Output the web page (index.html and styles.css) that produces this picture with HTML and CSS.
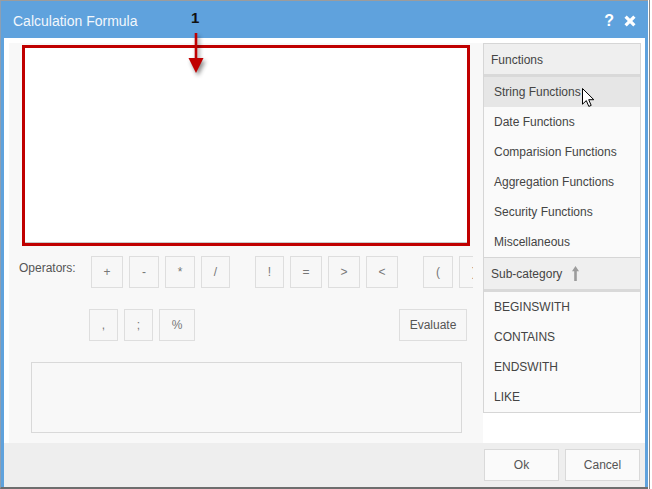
FILE: index.html
```html
<!DOCTYPE html>
<html>
<head>
<meta charset="utf-8">
<title>Calculation Formula</title>
<link rel="stylesheet" href="styles.css">
</head>
<body>
<div class="window">
  <div class="titlebar">
    <span class="title">Calculation Formula</span>
    <div class="tools">
      <span class="help">?</span>
      <svg class="close" width="12" height="12" viewBox="0 0 12 12"><path d="M1.6 1.6L10.4 10.4M10.4 1.6L1.6 10.4" stroke="#fff" stroke-width="3.2"/></svg>
    </div>
  </div>
  <div class="content">
    <div class="editor">
      <div class="formula-box"><div class="formula-input"></div></div>
      <div class="ops">
        <div class="ops-label">Operators:</div>
        <div class="ops-rows">
          <div class="ops-row row1">
            <div class="op w32">+</div>
            <div class="op w30">-</div>
            <div class="op w30">*</div>
            <div class="op w29">/</div>
            <div class="op w29 group">!</div>
            <div class="op w32">=</div>
            <div class="op w32">&gt;</div>
            <div class="op w32">&lt;</div>
            <div class="op w30 group">(</div>
            <div class="op w30">)</div>
          </div>
          <div class="ops-row row2">
            <div class="op w29">,</div>
            <div class="op w29">;</div>
            <div class="op w36">%</div>
            <div class="op evaluate">Evaluate</div>
          </div>
        </div>
      </div>
      <div class="result"></div>
    </div>
    <div class="side">
      <div class="list">
        <div class="list-head top">Functions</div>
        <div class="item hover">String Functions</div>
        <div class="item">Date Functions</div>
        <div class="item">Comparision Functions</div>
        <div class="item">Aggregation Functions</div>
        <div class="item">Security Functions</div>
        <div class="item">Miscellaneous</div>
        <div class="list-head sub">Sub-category
          <svg class="sort-icon" width="7" height="15" viewBox="0 0 7 15"><path d="M3.5 0L7 5.2H4.8V15H2.2V5.2H0Z" fill="#9c9c9c"/></svg>
        </div>
        <div class="item">BEGINSWITH</div>
        <div class="item">CONTAINS</div>
        <div class="item">ENDSWITH</div>
        <div class="item">LIKE</div>
      </div>
    </div>
  </div>
  <div class="footer">
    <button class="btn">Ok</button>
    <button class="btn">Cancel</button>
  </div>

  <span class="anno-num">1</span>
  <svg class="anno-arrow" width="24" height="48" viewBox="0 0 24 48"><rect x="8.7" y="2" width="2.6" height="27" fill="#c00000"/><path d="M2.5 27H17.5L10 42Z" fill="#c00000"/></svg>
  <svg class="cursor" width="13" height="20" viewBox="0 0 13 20"><path d="M0.5 0.5V16.2L4.3 12.6L6.8 18.4L9.2 17.4L6.7 11.7H11.8Z" fill="#fff" stroke="#000" stroke-width="1" stroke-linejoin="miter"/></svg>
</div>
</body>
</html>
```
FILE: styles.css
```css
body {
  margin: 0;
  background: #fff;
  font-family: "Liberation Sans", Arial, sans-serif;
}

.window {
  position: relative;
  width: 648px;
  height: 489px;
  box-sizing: border-box;
  border-top: 1px solid #9c9c9c;
  border-left: 1px solid #8d9fb3;
  border-bottom: 2px solid #6e6e6e;
  background: #5fa2dd;
  padding: 0 3px;
  display: flex;
  flex-direction: column;
  box-shadow: 1px 0 0 #fff, 2px 0 0 #8a8a8a;
}

.titlebar {
  flex: none;
  height: 37px;
  box-sizing: border-box;
  padding: 2px 9px 0 9px;
  display: flex;
  align-items: center;
  justify-content: space-between;
  color: #f2f7fc;
}

.title {
  font-size: 14px;
  line-height: 16px;
}

.tools {
  display: flex;
  align-items: center;
  gap: 10px;
}

.help {
  font-weight: bold;
  font-size: 16px;
  line-height: 16px;
  color: #fff;
}

.close {
  display: block;
}

.content {
  flex: 1;
  min-height: 0;
  display: flex;
  background: #fff;
  padding: 5px 4px 0 5px;
}

.editor {
  width: 474px;
  flex: none;
  background: #f8f8f8;
  display: flex;
  flex-direction: column;
}

.formula-box {
  margin: 2px 0 0 13px;
  width: 448px;
  height: 201px;
  box-sizing: border-box;
  border: 3px solid #c00000;
  background: #fff;
}

.formula-input {
  height: 100%;
  box-sizing: border-box;
  border-bottom: 1px solid #c9c9c9;
}

.ops {
  display: flex;
  margin-top: 10px;
}

.ops-label {
  width: 80px;
  flex: none;
  box-sizing: border-box;
  padding: 5px 0 0 10px;
  font-size: 12px;
  line-height: 14px;
  color: #555;
}

.ops-rows {
  width: 384px;
  overflow: hidden;
}

.ops-row {
  display: flex;
  gap: 6px;
  height: 32px;
}

.row1 {
  margin-left: 2px;
}

.row2 {
  margin-top: 21px;
}

.op {
  flex: none;
  height: 32px;
  box-sizing: border-box;
  border: 1px solid #dedede;
  background: #f7f7f7;
  color: #777;
  font-size: 12px;
  display: flex;
  align-items: center;
  justify-content: center;
}

.w29 { width: 29px; }
.w30 { width: 30px; }
.w32 { width: 32px; }
.w36 { width: 36px; }

.group {
  margin-left: 19px;
}

.evaluate {
  width: 68px;
  margin-left: auto;
  margin-right: 6px;
  color: #555;
}

.result {
  margin: 21px 0 0 22px;
  width: 431px;
  height: 71px;
  box-sizing: border-box;
  border: 1px solid #d9d9d9;
  background: #f8f8f8;
}

.side {
  width: 158px;
  flex: none;
}

.list {
  border: 1px solid #d6d6d6;
  background: #fafafa;
}

.list-head {
  height: 30px;
  box-sizing: content-box;
  border-bottom: 3px solid #d9d9d9;
  background: #efefef;
  display: flex;
  align-items: center;
  padding-left: 7px;
  font-size: 12px;
  color: #444;
}

.list-head.top {
  padding-top: 1px;
  height: 29px;
}

.list-head.sub {
  border-top: 1px solid #d6d6d6;
  height: 31px;
}

.sort-icon {
  margin-left: 10px;
}

.item {
  height: 30px;
  display: flex;
  align-items: center;
  padding-left: 10px;
  font-size: 12px;
  color: #444;
}

.item.hover {
  background: #e6e6e6;
}

.footer {
  flex: none;
  height: 44px;
  box-sizing: border-box;
  background: #eeeeee;
  display: flex;
  justify-content: flex-end;
  gap: 6px;
  padding: 6px 5px 0 0;
}

.btn {
  width: 75px;
  height: 32px;
  box-sizing: border-box;
  border: 1px solid #d9d9d9;
  background: #fafafa;
  color: #555;
  font-family: inherit;
  font-size: 12px;
  padding: 0;
}

.anno-num {
  position: absolute;
  left: 190px;
  top: 8px;
  font-weight: bold;
  font-size: 15px;
  line-height: 17px;
  color: #111;
}

.anno-arrow {
  position: absolute;
  left: 185px;
  top: 30px;
  filter: drop-shadow(2px 3px 2px rgba(0, 0, 0, 0.45));
}

.cursor {
  position: absolute;
  left: 581px;
  top: 87px;
}
```
